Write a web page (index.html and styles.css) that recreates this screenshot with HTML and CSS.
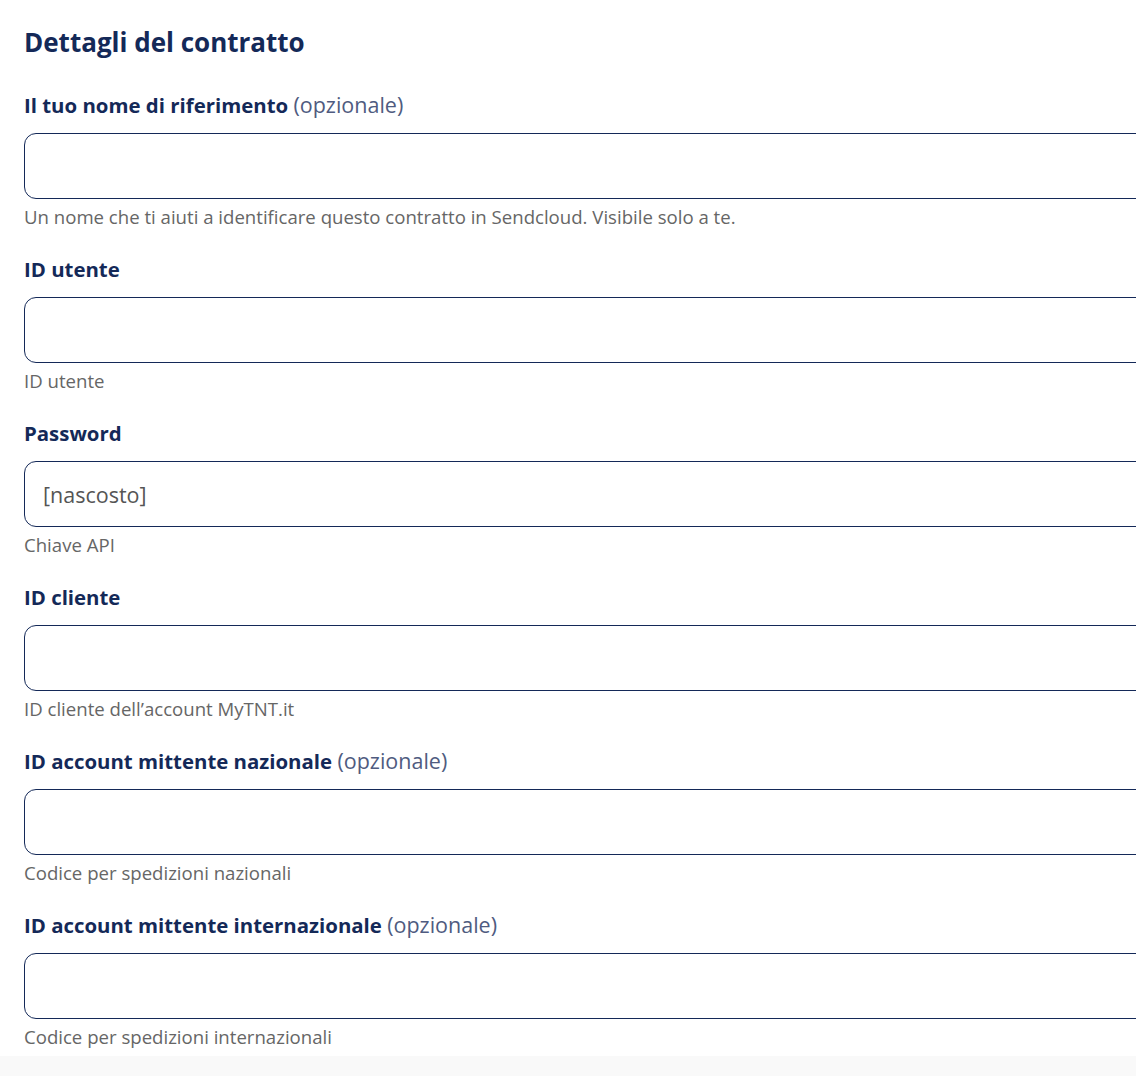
FILE: index.html
```html
<!DOCTYPE html>
<html lang="it">
<head>
    <meta charset="UTF-8" />
    <meta name="viewport" content="width=device-width, initial-scale=1" />
    <title>Dettagli del contratto</title>
    <link rel="stylesheet" href="styles.css">
</head>
<body>
    <div class="page">
        <h2 class="title">Dettagli del contratto</h2>

        <form class="contract-form">
            <div class="form-group">
                <label for="ref">Il tuo nome di riferimento <span class="optional">(opzionale)</span></label>
                <input type="text" id="ref" />
                <p class="hint">Un nome che ti aiuti a identificare questo contratto in Sendcloud. Visibile solo a te.</p>
            </div>
            <div class="form-group">
                <label for="user">ID utente</label>
                <input type="text" id="user" />
                <p class="hint">ID utente</p>
            </div>
            <div class="form-group">
                <label for="pass">Password</label>
                <input type="text" id="pass" value="[nascosto]" />
                <p class="hint">Chiave API</p>
            </div>
            <div class="form-group">
                <label for="client">ID cliente</label>
                <input type="text" id="client" />
                <p class="hint">ID cliente dell’account MyTNT.it</p>
            </div>
            <div class="form-group">
                <label for="national">ID account mittente nazionale <span class="optional">(opzionale)</span></label>
                <input type="text" id="national" />
                <p class="hint">Codice per spedizioni nazionali</p>
            </div>
            <div class="form-group">
                <label for="intl">ID account mittente internazionale <span class="optional">(opzionale)</span></label>
                <input type="text" id="intl" />
                <p class="hint">Codice per spedizioni internazionali</p>
            </div>
        </form>
    </div>
    <div class="footer"></div>
</body>
</html>
```

FILE: styles.css
```css
:root {
    --navy: #142958;
    --muted: #4f5b80;
    --hint: #666666;
}

html, body {
    margin: 0;
    padding: 0;
    overflow: hidden;
    background: #fff;
}

body {
    font-family: 'Open Sans', 'Lato', sans-serif;
    color: var(--navy);
}

.page {
    padding: 26px 0 0 24px;
}

.title {
    margin: 0 0 35px;
    font-size: 26px;
    line-height: 32px;
    font-weight: 700;
    color: var(--navy);
}

.form-group {
    margin-bottom: 28px;
}

.form-group:last-child {
    margin-bottom: 7px;
}

label {
    display: block;
    font-size: 20.4px;
    line-height: 24px;
    font-weight: 700;
    color: var(--navy);
    margin-bottom: 16px;
}

.optional {
    font-size: 21.5px;
    font-weight: 400;
    color: var(--muted);
}

input[type="text"] {
    display: block;
    width: 1160px;
    height: 66px;
    box-sizing: border-box;
    border: 1px solid var(--navy);
    border-radius: 12px;
    padding: 0 18px;
    font-family: inherit;
    font-size: 21.5px;
    color: #555;
    background: #fff;
    outline: none;
}

.hint {
    margin: 6px 0 0;
    font-size: 18.6px;
    line-height: 24px;
    color: var(--hint);
}

.footer {
    height: 40px;
    background: #f9f9f9;
}
```
